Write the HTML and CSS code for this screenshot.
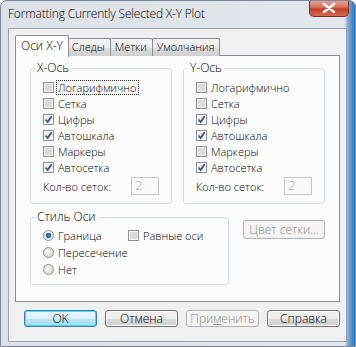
FILE: index.html
```html
<!DOCTYPE html>
<html lang="ru">
<head>
  <meta charset="UTF-8" />
  <title>Formatting Currently Selected X-Y Plot</title>
  <link rel="stylesheet" href="styles.css">
</head>
<body>
  <div class="window">
    <div class="titlebar">
      <span class="title">Formatting Currently Selected X-Y Plot</span>
      <span class="close">
        <svg width="14" height="10" viewBox="0 0 14 10"><path d="M2 1 L12 9 M12 1 L2 9" stroke="#fff" stroke-width="2.6" stroke-linecap="round"/></svg>
      </span>
    </div>

    <div class="client">
      <div class="tabs">
        <div class="tab active">Оси X-Y</div>
        <div class="tab">Следы</div>
        <div class="tab">Метки</div>
        <div class="tab">Умолчания</div>
      </div>

      <div class="panel">
        <div class="axes">
          <fieldset class="group">
            <legend>X-Ось</legend>
            <div class="check"><span class="box"></span><span class="focus">Логарифмично</span></div>
            <div class="check"><span class="box"></span>Сетка</div>
            <div class="check"><span class="box on"><svg width="9" height="9" viewBox="0 0 9 9"><path d="M1.5 4.5 L3.6 7 L7.6 1.2" fill="none" stroke="#324f93" stroke-width="1.7"/></svg></span>Цифры</div>
            <div class="check"><span class="box on"><svg width="9" height="9" viewBox="0 0 9 9"><path d="M1.5 4.5 L3.6 7 L7.6 1.2" fill="none" stroke="#324f93" stroke-width="1.7"/></svg></span>Автошкала</div>
            <div class="check"><span class="box"></span>Маркеры</div>
            <div class="check"><span class="box on"><svg width="9" height="9" viewBox="0 0 9 9"><path d="M1.5 4.5 L3.6 7 L7.6 1.2" fill="none" stroke="#324f93" stroke-width="1.7"/></svg></span>Автосетка</div>
            <div class="count"><span class="count-label">Кол-во сеток:</span><span class="field">2</span></div>
          </fieldset>

          <fieldset class="group">
            <legend>Y-Ось</legend>
            <div class="check"><span class="box"></span>Логарифмично</div>
            <div class="check"><span class="box"></span>Сетка</div>
            <div class="check"><span class="box on"><svg width="9" height="9" viewBox="0 0 9 9"><path d="M1.5 4.5 L3.6 7 L7.6 1.2" fill="none" stroke="#324f93" stroke-width="1.7"/></svg></span>Цифры</div>
            <div class="check"><span class="box on"><svg width="9" height="9" viewBox="0 0 9 9"><path d="M1.5 4.5 L3.6 7 L7.6 1.2" fill="none" stroke="#324f93" stroke-width="1.7"/></svg></span>Автошкала</div>
            <div class="check"><span class="box"></span>Маркеры</div>
            <div class="check"><span class="box on"><svg width="9" height="9" viewBox="0 0 9 9"><path d="M1.5 4.5 L3.6 7 L7.6 1.2" fill="none" stroke="#324f93" stroke-width="1.7"/></svg></span>Автосетка</div>
            <div class="count"><span class="count-label">Кол-во сеток:</span><span class="field">2</span></div>
          </fieldset>
        </div>

        <div class="lower">
          <fieldset class="group style">
            <legend>Стиль Оси</legend>
            <div class="style-grid">
              <div class="radio-row"><span class="radio on"></span>Граница</div>
              <div class="check"><span class="box"></span>Равные оси</div>
              <div class="radio-row"><span class="radio"></span>Пересечение</div>
              <div></div>
              <div class="radio-row"><span class="radio"></span>Нет</div>
            </div>
          </fieldset>
          <button class="btn grid-color" disabled>Цвет сетки...</button>
        </div>
      </div>

      <div class="buttons">
        <button class="btn default">OK</button>
        <button class="btn">Отмена</button>
        <button class="btn" disabled>При<u>м</u>енить</button>
        <button class="btn">Справка</button>
      </div>
    </div>
  </div>
</body>
</html>
```

FILE: styles.css
```css
body {
  margin: 0;
  font-family: 'Open Sans', 'Noto Sans', sans-serif;
  font-size: 11px;
  font-weight: 300;
  color: #000;
  background: #fff;
}
.window {
  width: 356px;
  height: 347px;
  box-sizing: border-box;
  display: flex;
  flex-direction: column;
  border: 1px solid #7d8896;
  border-radius: 7px 7px 0 0;
  background: linear-gradient(to right, #dde2e8 0, #e3e7ec 344px, #8fb3d6 346px, #2d77bf 354px);
  overflow: hidden;
}
.titlebar {
  height: 27px;
  display: flex;
  justify-content: space-between;
  align-items: flex-start;
  padding-left: 7px;
  padding-right: 6px;
}
.title {
  font-size: 12px;
  line-height: 14px;
  margin-top: 6px;
  letter-spacing: -0.2px;
}
.close {
  width: 40px;
  height: 17px;
  margin-top: -1px;
  box-sizing: border-box;
  display: flex;
  align-items: center;
  justify-content: center;
  border: 1px solid #7a3024;
  border-top: none;
  border-radius: 0 0 5px 5px;
  background: linear-gradient(#e4a89c 0, #d7755f 45%, #c2402a 55%, #d66c4e 100%);
}
.client {
  width: 339px;
  height: 314px;
  margin-left: 7px;
  box-sizing: border-box;
  border: 1px solid #9aa4b0;
  background: #f0f0f0;
  padding: 6px 6px 0 6px;
}
.tabs {
  display: flex;
  align-items: flex-end;
  height: 21px;
  position: relative;
  z-index: 1;
}
.tab {
  height: 18px;
  line-height: 16px;
  padding: 0 5px 0 4px;
  box-sizing: border-box;
  border: 1px solid #898c95;
  border-bottom: none;
  margin-left: -1px;
  border-radius: 2px 2px 0 0;
  background: linear-gradient(#f3f3f3, #ebebeb 50%, #dddddd 51%, #cfcfcf);
}
.tab.active {
  height: 22px;
  line-height: 19px;
  padding: 0 5px;
  margin-left: 0;
  margin-right: -1px;
  background: #fcfcfc;
  font-size: 12px;
  position: relative;
  top: 1px;
}
.panel {
  height: 247px;
  box-sizing: border-box;
  border: 1px solid #898c95;
  background: #fcfcfc;
  margin-top: -1px;
  padding: 5px 14px 0 14px;
}
.axes {
  display: grid;
  grid-template-columns: 142px 142px;
  gap: 11px;
}
.group {
  margin: 0;
  border: 1px solid #d5dfe5;
  border-radius: 3px;
  padding: 4px 12px 8px 12px;
  min-width: 0;
}
.group legend {
  line-height: 14px;
  font-size: 12px;
  padding: 0 2px;
  margin-left: -8px;
}
.check, .radio-row {
  display: flex;
  align-items: center;
  height: 16px;
  gap: 4px;
  white-space: nowrap;
}
.box {
  width: 11px;
  height: 11px;
  box-sizing: border-box;
  border: 1px solid #8f8f8f;
  background: #fff;
  box-shadow: inset 0 0 0 1px #f4f4f4, inset 0 0 0 5px #dcdcdc;
  flex: none;
  display: flex;
  align-items: center;
  justify-content: center;
}
.box.on {
  box-shadow: inset 0 0 0 1px #fdfdfd;
  background: #eef0f3;
}
.focus {
  outline: 1px dotted #333;
  outline-offset: 0;
  padding: 0 1px;
  margin-left: -1px;
  line-height: 13px;
}
.count {
  display: flex;
  align-items: center;
  height: 18px;
  margin-top: 2px;
}
.count-label {
  width: 90px;
}
.field {
  width: 28px;
  height: 18px;
  box-sizing: border-box;
  border: 1px solid #c4c4c4;
  background: #fafafa;
  color: #9a9a9a;
  font-size: 12px;
  line-height: 16px;
  padding-left: 3px;
}
.lower {
  display: flex;
  align-items: flex-start;
  margin-top: 6px;
}
.style {
  width: 199px;
  box-sizing: border-box;
  padding: 3px 12px 6px 12px;
}
.style-grid {
  display: grid;
  grid-template-columns: 85px 1fr;
}
.style-grid .radio-row,
.style-grid .check {
  height: 17px;
}
.radio {
  width: 11px;
  height: 11px;
  box-sizing: border-box;
  border-radius: 50%;
  border: 1px solid #8f8f8f;
  background: radial-gradient(circle at 40% 40%, #fbfbfb 0, #d4d4d4 80%);
  flex: none;
}
.radio.on {
  background: radial-gradient(circle, #4f93c9 0, #1f5d96 2.5px, #e9eef3 3px, #fbfbfb 100%);
}
.btn {
  font-family: inherit;
  font-size: 12px;
  font-weight: 300;
  color: #000;
  height: 17px;
  line-height: 14px;
  padding: 0;
  border: 1px solid #707070;
  border-radius: 3px;
  background: linear-gradient(#f2f2f2, #ebebeb 50%, #dddddd 51%, #cfcfcf);
  box-shadow: inset 0 0 0 1px #fcfcfc;
}
.btn:disabled {
  color: #8a8a8a;
  border-color: #adb2b5;
  background: #f4f4f4;
  box-shadow: none;
}
.grid-color {
  width: 82px;
  height: 19px;
  margin-left: 14px;
  margin-top: 10px;
}
.buttons {
  display: flex;
  justify-content: flex-end;
  gap: 8px;
  margin-top: 8px;
}
.buttons .btn {
  width: 73px;
}
.btn.default {
  border-color: #3c7fb1;
  background: linear-gradient(#eaf6fd, #d9f0fc 50%, #bee6fd 51%, #a7d9f5);
  box-shadow: inset 0 0 0 1px #48d8fb;
}
```
